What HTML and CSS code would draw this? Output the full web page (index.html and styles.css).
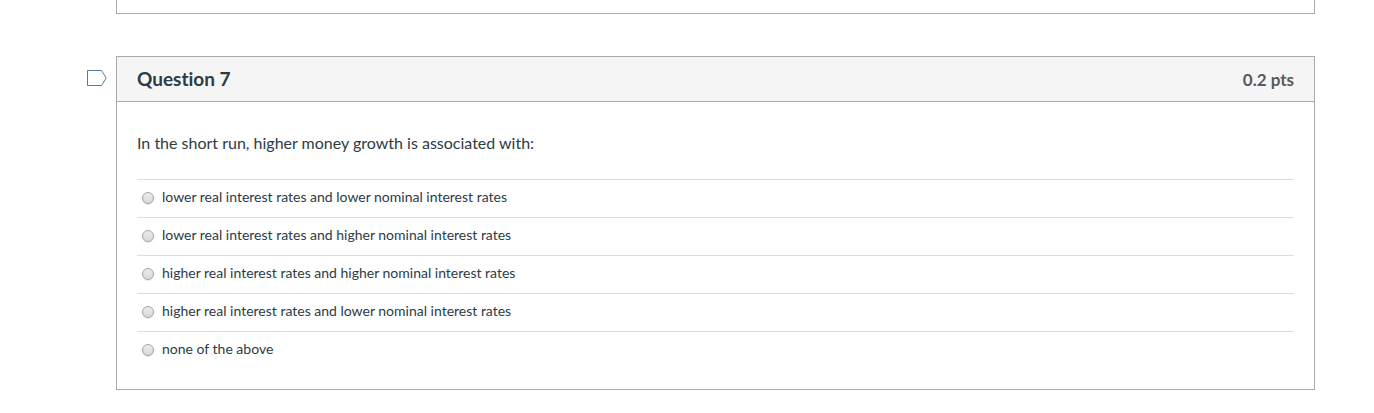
FILE: index.html
```
<!DOCTYPE html>
<html lang="en">
<head>
    <meta charset="UTF-8">
    <meta name="viewport" content="width=device-width, initial-scale=1.0">
    <title>Quiz</title>
    <link rel="stylesheet" href="styles.css">
</head>
<body>
    <main class="quiz">
        <div class="previous-question"></div>

        <div class="question-holder">
            <button class="flag" type="button" aria-label="Flag question 7">
                <svg width="20" height="16" viewBox="0 0 20 16" fill="none" stroke="#4f7f9b">
                    <path d="M0.5 0.5H14.5L19.2 8L14.5 15.5H0.5Z"/>
                </svg>
            </button>
            <section class="question">
                <div class="header">
                    <h2 class="question-name">Question 7</h2>
                    <span class="points">0.2 pts</span>
                </div>
                <form class="text">
                    <p class="question-text" id="question_text">In the short run, higher money growth is associated with:</p>
                    <div class="answers" role="radiogroup" aria-labelledby="question_text">
                        <div class="answer">
                            <input type="radio" name="question_7" id="answer_1">
                            <label for="answer_1">lower real interest rates and lower nominal interest rates</label>
                        </div>
                        <div class="answer">
                            <input type="radio" name="question_7" id="answer_2">
                            <label for="answer_2">lower real interest rates and higher nominal interest rates</label>
                        </div>
                        <div class="answer">
                            <input type="radio" name="question_7" id="answer_3">
                            <label for="answer_3">higher real interest rates and higher nominal interest rates</label>
                        </div>
                        <div class="answer">
                            <input type="radio" name="question_7" id="answer_4">
                            <label for="answer_4">higher real interest rates and lower nominal interest rates</label>
                        </div>
                        <div class="answer">
                            <input type="radio" name="question_7" id="answer_5">
                            <label for="answer_5">none of the above</label>
                        </div>
                    </div>
                </form>
            </section>
        </div>
    </main>
</body>
</html>
```
FILE: styles.css
```
* {
    box-sizing: border-box;
}
body {
    margin: 0;
    background-color: #fff;
    color: #2d3b45;
    font-family: Lato, "Liberation Sans", sans-serif;
    font-size: 16px;
    line-height: 24px;
    font-variant-ligatures: none;
}
.quiz {
    padding: 0 59px 20px 87px;
}
.previous-question {
    height: 14px;
    margin: 0 0 42px 29px;
    border: 1px solid #aaa;
    border-top: 0;
}
.question-holder {
    display: flex;
    align-items: flex-start;
}
.flag {
    display: flex;
    width: 29px;
    padding: 14px 0;
    border: 0;
    background: none;
    cursor: pointer;
}
.question {
    flex: 1;
    border: 1px solid #aaa;
}
.header {
    display: flex;
    justify-content: space-between;
    align-items: baseline;
    height: 45px;
    padding: 10px 20px;
    background-color: #f5f5f5;
    border-bottom: 1px solid #aaa;
}
.question-name {
    margin: 0;
    font-size: 19px;
    font-weight: bold;
}
.points {
    color: #595959;
    font-size: 17px;
    font-weight: bold;
}
.text {
    padding: 29px 20px 20px;
}
.question-text {
    margin: 0 0 24px;
}
.answer {
    display: flex;
    align-items: center;
    height: 38px;
    padding: 0 0 2px 5px;
    border-top: 1px solid #ddd;
}
.answer input {
    appearance: none;
    width: 12px;
    height: 12px;
    margin: 0 8px 0 0;
    border: 1px solid #a6a6a6;
    border-radius: 50%;
    background: linear-gradient(#ececec, #d8d8d8);
    box-shadow: 0 1px 1px #e6e6e6;
}
.answer input:checked {
    background: radial-gradient(#555 30%, #e2e2e2 40%);
}
.answer label {
    padding-bottom: 2px;
    font-size: 14px;
    line-height: 20px;
    cursor: pointer;
}
```
